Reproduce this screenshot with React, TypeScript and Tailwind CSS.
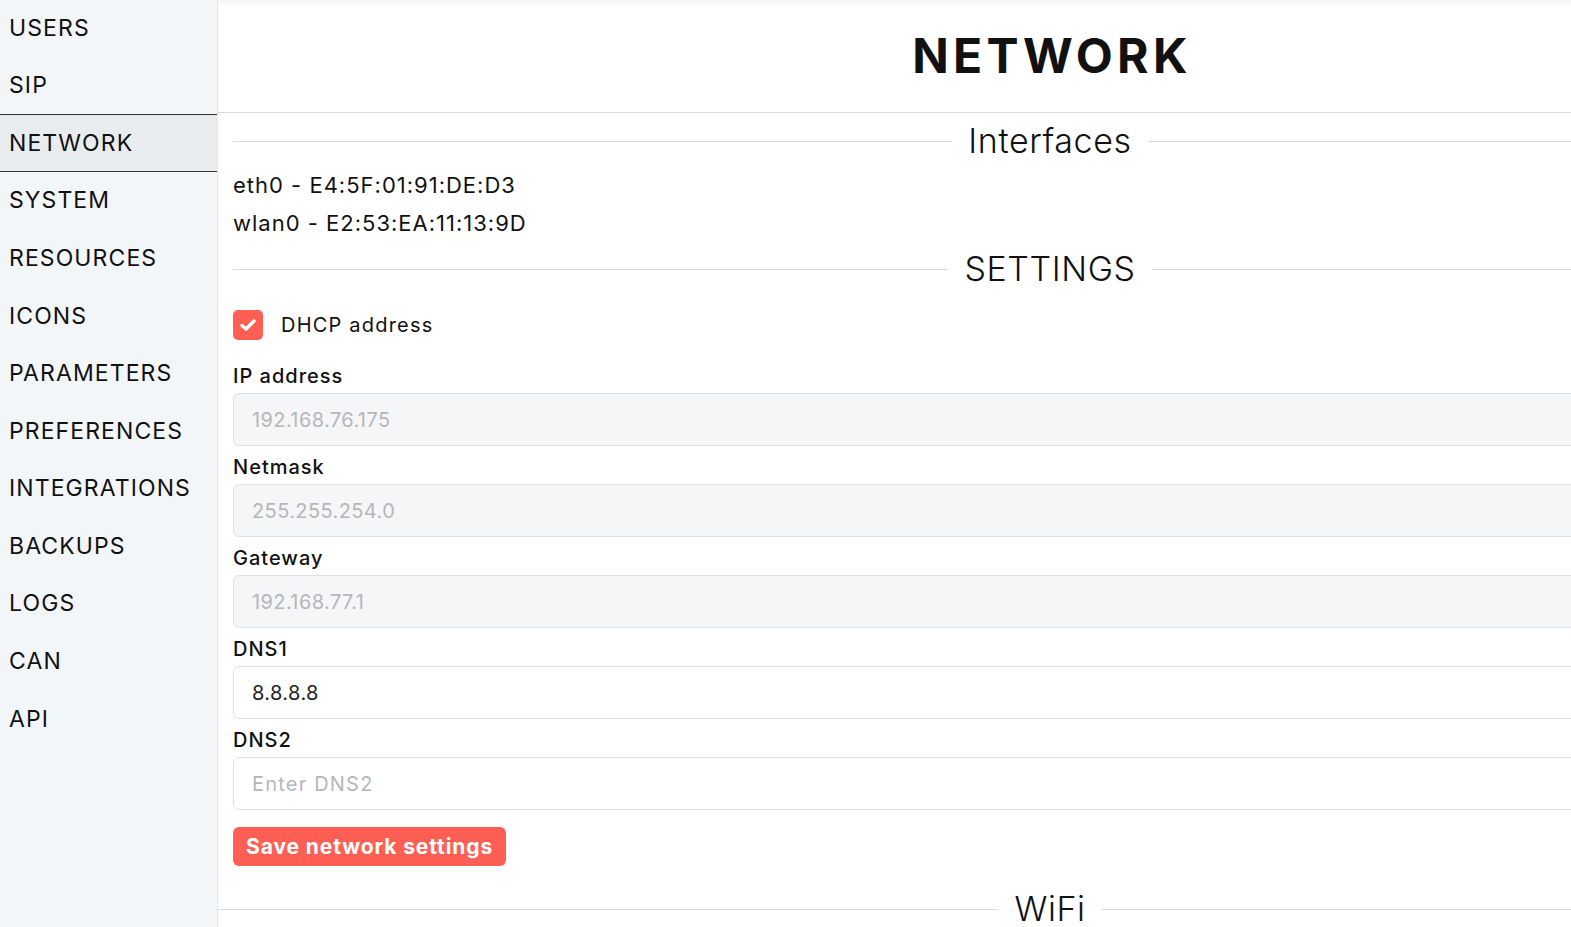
import React from "react";

const items = ["USERS","SIP","NETWORK","SYSTEM","RESOURCES","ICONS","PARAMETERS","PREFERENCES","INTEGRATIONS","BACKUPS","LOGS","CAN","API"];

function Heading({ text, className = "" }: { text: string; className?: string }) {
  return (
    <div className={`flex items-center h-[50px] ${className}`}>
      <div className="flex-1 h-px bg-[#d5d9de]" />
      <div className="px-[16px] text-[34px] font-light leading-none tracking-[0.6px] text-[#111]">{text}</div>
      <div className="flex-1 h-px bg-[#d5d9de]" />
    </div>
  );
}

function Field({ label, value, placeholder, disabled }: { label: string; value?: string; placeholder?: string; disabled?: boolean }) {
  return (
    <div className="mt-[7px]">
      <div className="h-[28px] leading-[28px] text-[20px] font-medium tracking-[1px] text-[#111]">{label}</div>
      <div
        className={`mt-[3px] h-[53px] rounded-[6px] border border-[#dde1e6] flex items-center pl-[18px] text-[20px] tracking-[0.4px] ${disabled ? "bg-[#f5f6f8]" : "bg-white"} ${value ? "text-[#222]" : "text-[#b4b7bb]"}`}
      >
        <span className={value ? "" : placeholder && placeholder.startsWith("Enter") ? "tracking-[1.2px]" : ""}>{value || placeholder}</span>
      </div>
    </div>
  );
}

export default function App() {
  return (
    <div className="w-screen h-screen overflow-hidden flex bg-white text-[#111]" style={{ fontFamily: "Inter, 'Noto Sans', sans-serif" }}>
      <aside className="w-[218px] shrink-0 bg-[#f3f6f9] border-r border-[#e3e7eb] h-full">
        <div className="-mt-[1px]">
          {items.map((it) => (
            <div
              key={it}
              className={`h-[57.6px] flex items-center pl-[9px] text-[23px] tracking-[1.1px] ${it === "NETWORK" ? "bg-[#e9ecef] border-y border-[#333]" : ""}`}
            >
              {it}
            </div>
          ))}
        </div>
      </aside>
      <main className="w-[1664px] shrink-0">
        <header className="h-[113px] border-b border-[#d5dbe1] flex items-center justify-center shadow-[inset_0_5px_5px_-3px_rgba(0,0,0,0.06)]">
          <h1 className="text-[48px] font-bold tracking-[4.3px] leading-none pl-[4px]">NETWORK</h1>
        </header>
        <div className="px-[15px]">
          <Heading text="Interfaces" className="mt-[3px]" />
          <div className="text-[22px] leading-[38px] tracking-[1px]">
            <div>eth0 - E4:5F:01:91:DE:D3</div>
            <div>wlan0 - E2:53:EA:11:13:9D</div>
          </div>
          <Heading text="SETTINGS" className="mt-[2px]" />
          <div className="mt-[16px] flex items-center h-[30px]">
            <div className="w-[30px] h-[30px] rounded-[5px] bg-[#fe5f55] flex items-center justify-center">
              <svg width="22" height="22" viewBox="0 0 22 22" fill="none">
                <polyline points="5,11.5 9,15 17,7" stroke="white" strokeWidth="3.4" strokeLinecap="round" strokeLinejoin="round" />
              </svg>
            </div>
            <span className="ml-[18px] text-[20px] tracking-[1.2px]">DHCP address</span>
          </div>
          <div className="mt-[22px]">
            <Field label="IP address" placeholder="192.168.76.175" disabled />
            <Field label="Netmask" placeholder="255.255.254.0" disabled />
            <Field label="Gateway" placeholder="192.168.77.1" disabled />
            <Field label="DNS1" value="8.8.8.8" />
            <Field label="DNS2" placeholder="Enter DNS2" />
          </div>
          <button className="mt-[17px] h-[39px] px-[13px] rounded-[6px] bg-[#fe5f55] text-white text-[21px] font-bold tracking-[0.9px]">
            Save network settings
          </button>
        </div>
        <Heading text="WiFi" className="mt-[18px]" />
      </main>
    </div>
  );
}
